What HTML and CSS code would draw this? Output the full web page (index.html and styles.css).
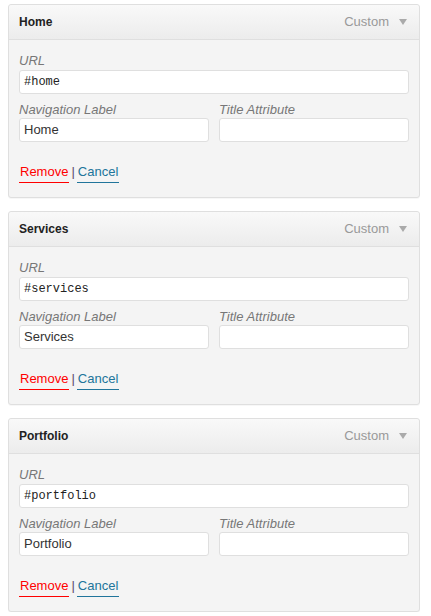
FILE: index.html
```html
<!DOCTYPE html>
<html>
<head>
<meta charset="utf-8">
<link rel="stylesheet" href="styles.css">
</head>
<body>
<div class="menu">
  <div class="item">
    <div class="item-head">
      <span class="item-title">Home</span>
      <span class="item-controls"><span class="item-type">Custom</span><span class="arrow"></span></span>
    </div>
    <div class="item-body">
      <div class="field">
        <label class="label">URL</label>
        <div class="input mono">#home</div>
      </div>
      <div class="row">
        <div class="field">
          <label class="label">Navigation Label</label>
          <div class="input">Home</div>
        </div>
        <div class="field">
          <label class="label">Title Attribute</label>
          <div class="input"></div>
        </div>
      </div>
      <div class="actions"><a class="remove">Remove</a><span class="sep">|</span><a class="cancel">Cancel</a></div>
    </div>
  </div>

  <div class="item">
    <div class="item-head">
      <span class="item-title">Services</span>
      <span class="item-controls"><span class="item-type">Custom</span><span class="arrow"></span></span>
    </div>
    <div class="item-body">
      <div class="field">
        <label class="label">URL</label>
        <div class="input mono">#services</div>
      </div>
      <div class="row">
        <div class="field">
          <label class="label">Navigation Label</label>
          <div class="input">Services</div>
        </div>
        <div class="field">
          <label class="label">Title Attribute</label>
          <div class="input"></div>
        </div>
      </div>
      <div class="actions"><a class="remove">Remove</a><span class="sep">|</span><a class="cancel">Cancel</a></div>
    </div>
  </div>

  <div class="item">
    <div class="item-head">
      <span class="item-title">Portfolio</span>
      <span class="item-controls"><span class="item-type">Custom</span><span class="arrow"></span></span>
    </div>
    <div class="item-body">
      <div class="field">
        <label class="label">URL</label>
        <div class="input mono">#portfolio</div>
      </div>
      <div class="row">
        <div class="field">
          <label class="label">Navigation Label</label>
          <div class="input">Portfolio</div>
        </div>
        <div class="field">
          <label class="label">Title Attribute</label>
          <div class="input"></div>
        </div>
      </div>
      <div class="actions"><a class="remove">Remove</a><span class="sep">|</span><a class="cancel">Cancel</a></div>
    </div>
  </div>
</div>
</body>
</html>
```
FILE: styles.css
```css
html, body {
  margin: 0;
  padding: 0;
  background: #ffffff;
}
body {
  font-family: "Liberation Sans", Arial, sans-serif;
  font-size: 13px;
  color: #333;
}
.menu {
  padding: 4px 11px 0 8px;
  display: flex;
  flex-direction: column;
  gap: 13px;
}
.item {
  border: 1px solid #dfdfdf;
  border-radius: 3px;
  background: #f4f4f4;
  box-shadow: 0 1px 0 rgba(0,0,0,0.03);
}
.item-head {
  height: 34px;
  border-bottom: 1px solid #dfdfdf;
  background: linear-gradient(to bottom, #f9f9f9, #ececec);
  border-radius: 3px 3px 0 0;
  display: flex;
  align-items: center;
  justify-content: space-between;
  padding: 0 12px 0 10px;
}
.item-title {
  font-weight: bold;
  font-size: 12px;
  color: #222;
}
.item-controls {
  display: flex;
  align-items: center;
  margin-top: -2px;
}
.item-type {
  color: #999;
  font-size: 13px;
}
.arrow {
  width: 0;
  height: 0;
  border-left: 4px solid transparent;
  border-right: 4px solid transparent;
  border-top: 6px solid #aaa;
  margin-left: 10px;
  margin-top: 2px;
}
.item-body {
  padding: 13px 10px 14px 10px;
}
.field {
  display: flex;
  flex-direction: column;
}
.label {
  font-style: italic;
  color: #777;
  line-height: 16px;
  margin-bottom: 1px;
}
.row .label {
  margin-bottom: 0;
}
.input {
  height: 22px;
  border: 1px solid #dfdfdf;
  border-radius: 3px;
  background: #fff;
  padding: 0 4px;
  line-height: 22px;
  color: #333;
  font-size: 13px;
}
.mono {
  font-family: "Liberation Mono", "Courier New", monospace;
  font-size: 12px;
  color: #222;
}
.row {
  display: grid;
  grid-template-columns: 1fr 1fr;
  gap: 10px;
  margin-top: 8px;
}
.actions {
  margin-top: 22px;
  line-height: 16px;
  display: flex;
  align-items: flex-start;
}
.remove, .cancel {
  padding: 0 1px 2px 1px;
  text-decoration: none;
  cursor: pointer;
}
.remove {
  color: #f00;
  border-bottom: 1px solid #f00;
}
.cancel {
  color: #21759b;
  border-bottom: 1px solid #21759b;
}
.sep {
  margin: 0 2px;
  color: #5a4a6a;
}
```
